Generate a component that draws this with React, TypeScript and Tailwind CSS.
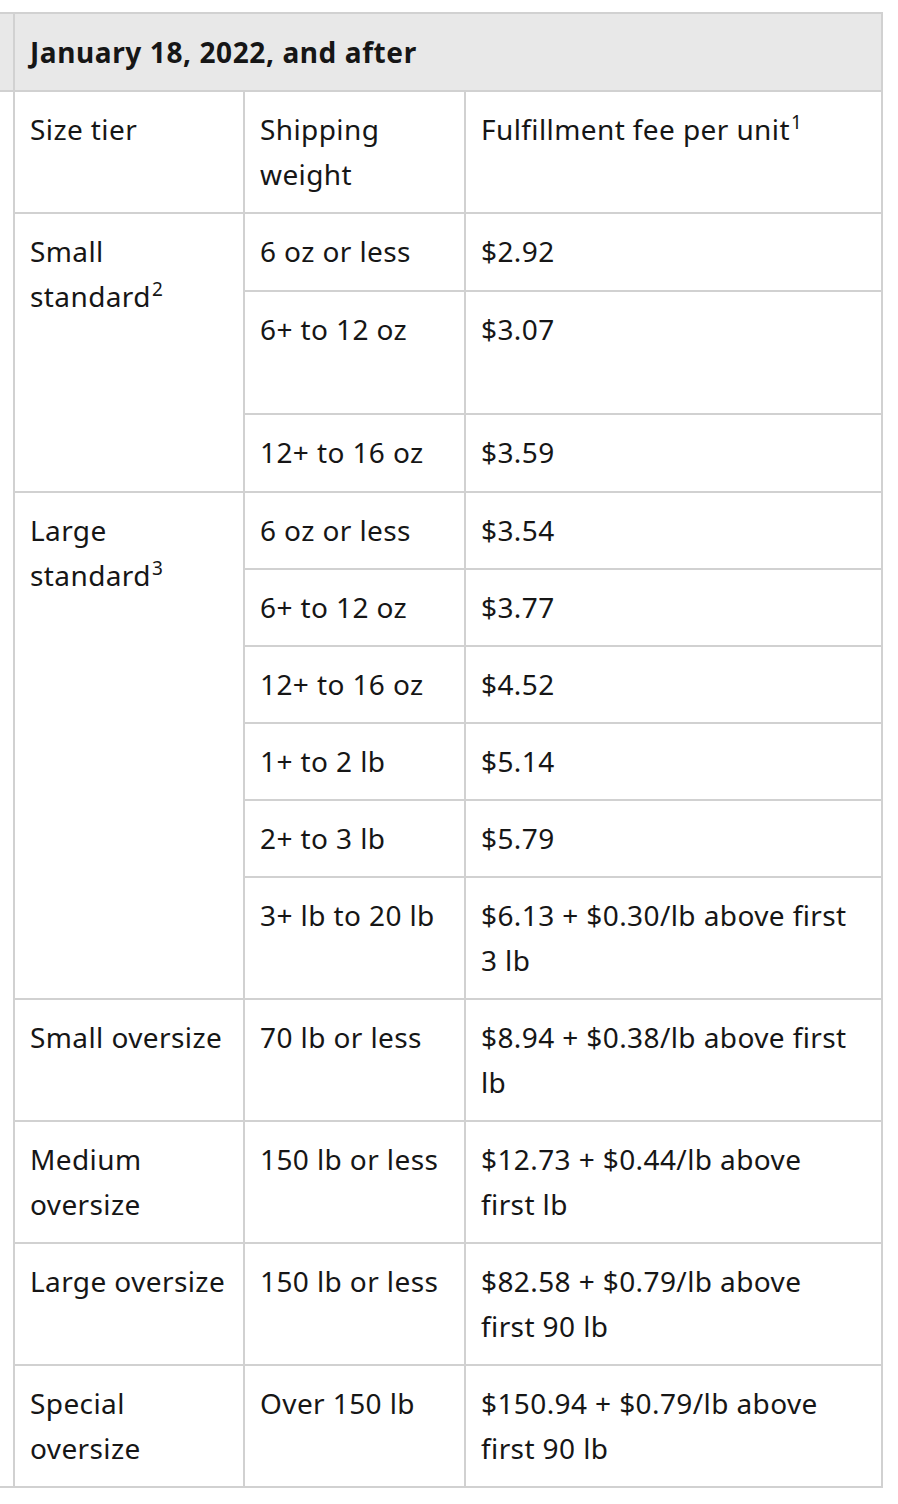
const FONT = { fontFamily: '"Noto Sans", "Open Sans", sans-serif' };

interface Row {
  tier?: React.ReactNode;
  tierSpan?: number;
  weight: string;
  fee: string;
  h: string;
}

const Sup = ({ n }: { n: string }) => (
  <span className="text-[19px] leading-none relative -top-[11px] ml-[1px]">{n}</span>
);

// line breaks in fee text follow the original layout
const rows: Row[] = [
  { tier: <>Small standard<Sup n="2" /></>, tierSpan: 3, weight: "6 oz or less", fee: "$2.92", h: "h-[78px]" },
  { weight: "6+ to 12 oz", fee: "$3.07", h: "h-[123px]" },
  { weight: "12+ to 16 oz", fee: "$3.59", h: "h-[78px]" },
  { tier: <>Large standard<Sup n="3" /></>, tierSpan: 6, weight: "6 oz or less", fee: "$3.54", h: "h-[77px]" },
  { weight: "6+ to 12 oz", fee: "$3.77", h: "h-[77px]" },
  { weight: "12+ to 16 oz", fee: "$4.52", h: "h-[77px]" },
  { weight: "1+ to 2 lb", fee: "$5.14", h: "h-[77px]" },
  { weight: "2+ to 3 lb", fee: "$5.79", h: "h-[77px]" },
  { weight: "3+ lb to 20 lb", fee: "$6.13 + $0.30/lb above first\n3 lb", h: "h-[122px]" },
  { tier: "Small oversize", tierSpan: 1, weight: "70 lb or less", fee: "$8.94 + $0.38/lb above first\nlb", h: "h-[122px]" },
  { tier: "Medium oversize", tierSpan: 1, weight: "150 lb or less", fee: "$12.73 + $0.44/lb above\nfirst lb", h: "h-[122px]" },
  { tier: "Large oversize", tierSpan: 1, weight: "150 lb or less", fee: "$82.58 + $0.79/lb above\nfirst 90 lb", h: "h-[122px]" },
  { tier: "Special oversize", tierSpan: 1, weight: "Over 150 lb", fee: "$150.94 + $0.79/lb above\nfirst 90 lb", h: "h-[122px]" },
];

const base = "border-2 border-[#d1d1d1] px-[15px] text-left";
const cell = base + " align-top py-[15px] font-normal";

export default function App() {
  return (
    <div className="bg-white w-[898px] min-h-[1504px] pt-[12px]" style={FONT}>
      <table className="border-collapse table-fixed w-[882px] text-[28px] leading-[45px] tracking-[0.4px] text-[#161616]">
        <colgroup>
          <col className="w-[14px]" />
          <col className="w-[230px]" />
          <col className="w-[221px]" />
          <col className="w-[417px]" />
        </colgroup>
        <thead>
          <tr className="h-[78px] bg-[#e8e8e8]">
            <td className="border-y-2 border-[#d1d1d1] p-0" />
            <th colSpan={3} className={base + " align-middle py-0 font-bold tracking-[0.6px]"}>
              January 18, 2022, and after
            </th>
          </tr>
        </thead>
        <tbody>
          <tr className="h-[122px]">
            <td rowSpan={14} className="border-b-2 border-[#d1d1d1] p-0" />
            <td className={cell}>Size tier</td>
            <td className={cell}>Shipping weight</td>
            <td className={cell}>
              Fulfillment fee per unit<Sup n="1" />
            </td>
          </tr>
          {rows.map((r, i) => (
            <tr key={i} className={r.h}>
              {r.tier !== undefined && (
                <td rowSpan={r.tierSpan} className={cell}>
                  {r.tier}
                </td>
              )}
              <td className={cell}>{r.weight}</td>
              <td className={cell + " whitespace-pre-line"}>{r.fee}</td>
            </tr>
          ))}
        </tbody>
      </table>
    </div>
  );
}
